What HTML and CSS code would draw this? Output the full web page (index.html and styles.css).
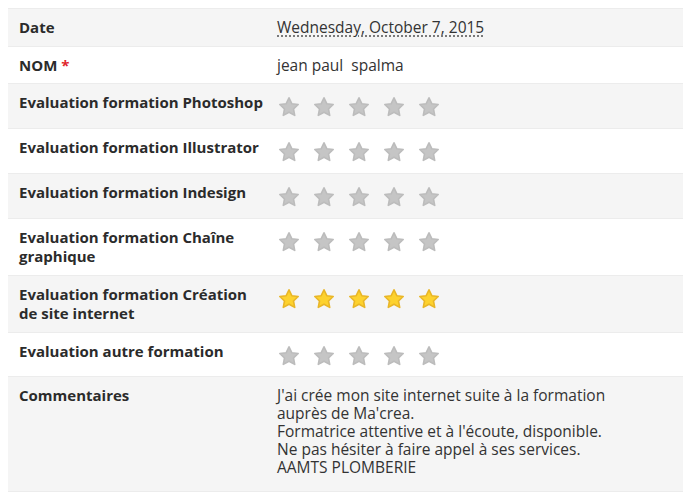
FILE: index.html
```html
<!DOCTYPE html>
<html lang="fr">
<head>
<meta charset="utf-8">
<title>Evaluation</title>
<link rel="stylesheet" href="styles.css">
</head>
<body>
<svg class="defs" width="0" height="0" aria-hidden="true">
  <symbol id="star" viewBox="0 0 24 24">
    <path d="M12 2.8l2.8 5.9 6.4.8-4.7 4.5 1.2 6.4L12 17.3l-5.7 3.1 1.2-6.4-4.7-4.5 6.4-.8z" stroke-linejoin="round" stroke-width="1.6"/>
  </symbol>
</svg>
<div class="sheet">
  <div class="row odd">
    <div class="label">Date</div>
    <div class="value"><span class="date">Wednesday, October 7, 2015</span></div>
  </div>
  <div class="row tight">
    <div class="label">NOM <span class="req">*</span></div>
    <div class="value">jean paul&nbsp; spalma</div>
  </div>
  <div class="row odd">
    <div class="label">Evaluation formation Photoshop</div>
    <div class="value stars">
      <svg class="star"><use href="#star"/></svg><svg class="star"><use href="#star"/></svg><svg class="star"><use href="#star"/></svg><svg class="star"><use href="#star"/></svg><svg class="star"><use href="#star"/></svg>
    </div>
  </div>
  <div class="row">
    <div class="label">Evaluation formation Illustrator</div>
    <div class="value stars">
      <svg class="star"><use href="#star"/></svg><svg class="star"><use href="#star"/></svg><svg class="star"><use href="#star"/></svg><svg class="star"><use href="#star"/></svg><svg class="star"><use href="#star"/></svg>
    </div>
  </div>
  <div class="row odd">
    <div class="label">Evaluation formation Indesign</div>
    <div class="value stars">
      <svg class="star"><use href="#star"/></svg><svg class="star"><use href="#star"/></svg><svg class="star"><use href="#star"/></svg><svg class="star"><use href="#star"/></svg><svg class="star"><use href="#star"/></svg>
    </div>
  </div>
  <div class="row">
    <div class="label">Evaluation formation Chaîne graphique</div>
    <div class="value stars">
      <svg class="star"><use href="#star"/></svg><svg class="star"><use href="#star"/></svg><svg class="star"><use href="#star"/></svg><svg class="star"><use href="#star"/></svg><svg class="star"><use href="#star"/></svg>
    </div>
  </div>
  <div class="row odd">
    <div class="label">Evaluation formation Création de site internet</div>
    <div class="value stars">
      <svg class="star on"><use href="#star"/></svg><svg class="star on"><use href="#star"/></svg><svg class="star on"><use href="#star"/></svg><svg class="star on"><use href="#star"/></svg><svg class="star on"><use href="#star"/></svg>
    </div>
  </div>
  <div class="row tight">
    <div class="label">Evaluation autre formation</div>
    <div class="value stars">
      <svg class="star"><use href="#star"/></svg><svg class="star"><use href="#star"/></svg><svg class="star"><use href="#star"/></svg><svg class="star"><use href="#star"/></svg><svg class="star"><use href="#star"/></svg>
    </div>
  </div>
  <div class="row odd">
    <div class="label">Commentaires</div>
    <div class="value comment">J'ai crée mon site internet suite à la formation<br>auprès de Ma'crea.<br>Formatrice attentive et à l'écoute, disponible.<br>Ne pas hésiter à faire appel à ses services.<br>AAMTS PLOMBERIE</div>
  </div>
</div>
</body>
</html>
```

FILE: styles.css
```css
html, body {
  margin: 0;
  padding: 0;
  background: #ffffff;
}
body {
  padding: 8px;
  font-family: "Open Sans", "DejaVu Sans", sans-serif;
  font-size: 15px;
  line-height: 19px;
  color: #333333;
}
.defs {
  position: absolute;
  width: 0;
  height: 0;
  overflow: hidden;
}
.sheet {
  width: 675px;
  border-bottom: 1px solid #ececec;
}
.row {
  display: grid;
  grid-template-columns: 262px 1fr;
  border-top: 1px solid #ececec;
  background: #ffffff;
}
.row.odd {
  background: #f5f5f5;
}
.label {
  padding: 9px 5px 9px 11px;
  font-weight: 700;
  font-size: 15px;
  color: #2b2b2b;
}
.row.tight .label,
.row.tight .value {
  padding-bottom: 8px;
}
.req {
  color: #e0262c;
}
.value {
  padding: 9px 8px 9px 7px;
  font-size: 15.5px;
}
.date {
  text-decoration: underline dotted #555;
  text-underline-offset: 3px;
}
.stars {
  display: flex;
  align-items: center;
  gap: 11px;
  height: 26px;
  padding-top: 10px;
  padding-bottom: 8px;
}
.row.tight .stars {
  padding-bottom: 7px;
}
.star {
  width: 24px;
  height: 24px;
  fill: #c5c5c5;
  stroke: #bcbcbc;
}
.star.on {
  fill: #fdd22e;
  stroke: #e9b627;
}
.comment {
  line-height: 18px;
  padding-bottom: 15px;
}
```
